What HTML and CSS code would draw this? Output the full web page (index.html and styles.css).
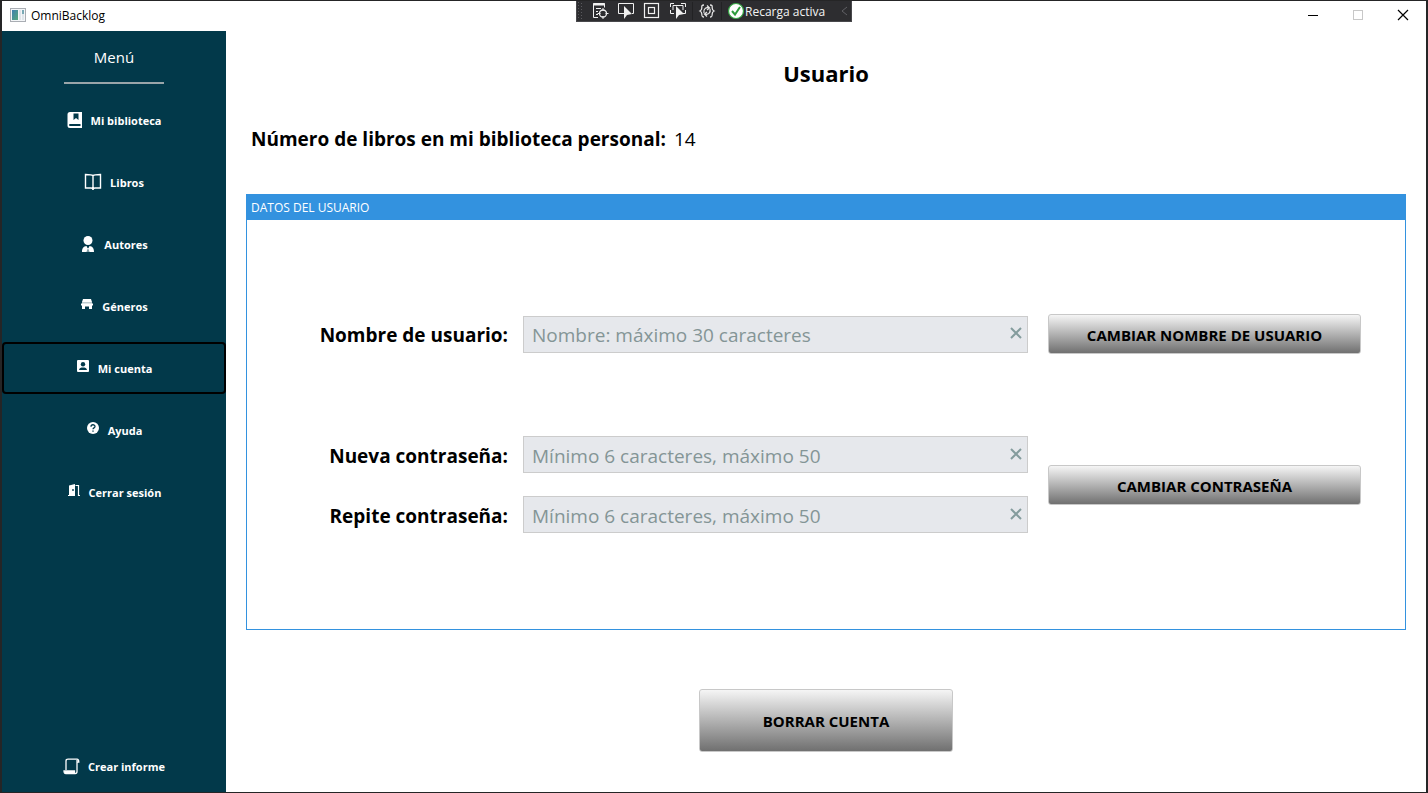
FILE: index.html
```html
<!DOCTYPE html>
<html lang="es">
<head>
<meta charset="utf-8">
<title>OmniBacklog</title>
<link rel="stylesheet" href="styles.css">
</head>
<body class="window">
  <div class="edge-mark"></div>
  <header class="titlebar">
    <svg class="app-icon" width="16" height="14" viewBox="0 0 16 14">
      <defs><linearGradient id="appFill" x1="0" y1="0" x2="1" y2="1"><stop offset="0" stop-color="#3f7fb0"/><stop offset="1" stop-color="#55a87c"/></linearGradient></defs>
      <rect x="0.5" y="0.5" width="15" height="13" fill="#f4f6f8" stroke="#a9adb3"/>
      <rect x="2" y="2" width="6" height="10" fill="url(#appFill)"/>
      <rect x="9" y="2" width="2" height="10" fill="#dfe5ea"/>
      <rect x="12" y="2" width="2" height="4" fill="#79a9b5"/>
      <rect x="12" y="6" width="2" height="6" fill="#dfe5ea"/>
    </svg>
    <span class="app-name">OmniBacklog</span>
    <div class="window-buttons">
      <button class="win-btn" aria-label="Minimizar"><svg width="12" height="12" viewBox="0 0 12 12"><path d="M1 6.500h10" stroke="#000"/></svg></button>
      <button class="win-btn" aria-label="Maximizar" disabled><svg width="12" height="12" viewBox="0 0 12 12"><rect x="1.500" y="1.500" width="9" height="9" fill="none" stroke="#c8c8c8"/></svg></button>
      <button class="win-btn" aria-label="Cerrar"><svg width="12" height="12" viewBox="0 0 12 12"><path d="M1 1l10 10M11 1L1 11" stroke="#000" stroke-width="1.200"/></svg></button>
    </div>
  </header>

  <div class="debug-bar">
    <svg width="6" height="18" viewBox="0 0 6 18"><path d="M1.500 0v18M4.500 1v17" stroke="#5a5a5e" stroke-dasharray="1 2"/></svg>
    <svg width="18" height="18" viewBox="0 0 18 18" fill="none" stroke="#f0f0f0"><path d="M7 15.500H2.500V1.500h11v4" /><path d="M2 2.500h12" stroke-width="2"/><path d="M5 6.500h5M5 9.500h2M5 12.500h2"/><circle cx="12" cy="11.500" r="3.500" stroke-width="1.300"/><path d="M12 6v3M12 14v3M6.500 11.500h3M14.500 11.500h3"/></svg>
    <svg width="18" height="18" viewBox="0 0 18 18"><path d="M7 11.500H1.500v-10h15v10H15" fill="none" stroke="#f0f0f0"/><path d="M7 4v13l3-4 5-1z" fill="#f0f0f0"/></svg>
    <svg width="18" height="18" viewBox="0 0 18 18" fill="none" stroke="#f0f0f0" stroke-width="1.200"><rect x="1.500" y="1.500" width="14" height="14"/><rect x="5.500" y="5.500" width="6" height="6"/></svg>
    <svg width="18" height="18" viewBox="0 0 18 18"><path d="M1.500 5V1.500H5M12 1.500h4.500V5M1.500 8v3.500H5M16.500 8v3.500H14M4 8V3.500h10V8" fill="none" stroke="#f0f0f0"/><path d="M7 4v13l3-4 5-1z" fill="#f0f0f0"/></svg>
    <span class="bar-split"></span>
    <svg width="18" height="18" viewBox="0 0 18 18" fill="none" stroke="#e4e4e4" stroke-width="1.300"><path d="M6 3C3.500 3 3.800 4 3.800 6S3 8.500 2 9c1 .5 1.800 1 1.800 3s0 3 2.200 3M12 3c2.500 0 2.200 1 2.200 3s.8 2.500 1.800 3c-1 .5-1.800 1-1.800 3s0 3-2.200 3"/><path d="M6 11c-1-4 2-6 5-5M9 3.500L11.500 6 9 8M12 7c1 4-2 6-5 5M9 10l-2.500 2L9 14.500"/></svg>
    <span class="bar-split"></span>
    <span class="debug-status">
      <svg width="18" height="18" viewBox="0 0 18 18"><circle cx="9" cy="9" r="7.500" fill="#fff" stroke="#36a845" stroke-width="1.200"/><path d="M5 9l3 3.500L13 5" fill="none" stroke="#2e9c3d" stroke-width="2"/></svg>
      Recarga activa
    </span>
    <svg class="debug-chevron" width="8" height="12" viewBox="0 0 8 12"><path d="M7 2L2 6l5 4" fill="none" stroke="#606065"/></svg>
  </div>

  <div class="layout">
    <aside class="sidebar">
      <h2 class="menu-title">Menú</h2>
      <nav class="menu">
        <button class="menu-item"><svg width="16" height="16" viewBox="0 0 16 16"><path d="M3 0h12v16H3a2.500 2.500 0 0 1-2.500-2.500v-11A2.500 2.500 0 0 1 3 0z" fill="#fff"/><path d="M6.500 1.500V8L9 6l2.500 2V1.500z" fill="#02394a"/><path d="M3 12h10.500v2H3a1 1 0 0 1 0-2z" fill="#02394a"/></svg>Mi biblioteca</button>
        <button class="menu-item"><svg width="18" height="18" viewBox="0 0 18 18" fill="none" stroke="#fff" stroke-width="1.400"><path d="M9 2.800C8 1.700 6.500 1.500 1.500 1.500V15H7c1 0 2 .3 2 2M9 2.800c1-1.100 2.500-1.300 7.500-1.300V15H11c-1 0-2 .3-2 2V2.800"/></svg>Libros</button>
        <button class="menu-item"><svg width="16" height="18" viewBox="0 0 16 18" fill="#fff"><circle cx="8" cy="5.500" r="4.500"/><path d="M2 17c0-4 1.500-5.500 4.500-6l1 2-.8 4zM14 17c0-4-1.500-5.500-4.500-6l-1 2 .8 4zM7.500 13h1v4h-1z"/></svg>Autores</button>
        <button class="menu-item"><svg width="14" height="18" viewBox="0 0 14 18" fill="#fff"><path d="M3 2h8l1 3H2z"/><path d="M2 5h10v2H2z" opacity=".75"/><path d="M1 6.500h12V8.500h-1V12H9V9.500H5V12H2V8.500H1z"/></svg>Géneros</button>
        <button class="menu-item menu-item-current"><svg width="14" height="18" viewBox="0 0 14 18"><rect x="1" y="1" width="12" height="12" rx="1" fill="#fff"/><circle cx="7" cy="5.200" r="2.200" fill="#02394a"/><path d="M3 11c.3-2 2-2.500 4-2.500s3.700.5 4 2.500z" fill="#02394a"/></svg>Mi cuenta</button>
        <button class="menu-item"><svg width="14" height="18" viewBox="0 0 14 18"><circle cx="7" cy="7" r="6" fill="#fff"/><path d="M5 5.800c0-2.800 4-2.500 4-.4C9 7 7 6.800 7 8.300M7 9.500v1.300" fill="none" stroke="#02394a" stroke-width="1.300"/></svg>Ayuda</button>
        <button class="menu-item"><svg width="14" height="18" viewBox="0 0 14 18"><path d="M1 12h1V2.500L8 1v12H1z" fill="#fff"/><path d="M8.500 2.500h3V12.500H13" fill="none" stroke="#fff" stroke-width="1.200"/><circle cx="6" cy="7" r=".9" fill="#02394a"/></svg>Cerrar sesión</button>
        <button class="menu-item menu-item-last"><svg width="17" height="17" viewBox="0 0 17 17" fill="none" stroke="#fff" stroke-width="1.300"><path d="M3 12V3c0-1.500.5-1.800 2-1.800h9c1.500 0 1.800.8 1.800 3H14M14 2v11.500c0 1.300-.5 2-1.800 2H3c-1.500 0-2-.8-2-2.500h10.500v1"/><path d="M1.500 14.200H12" stroke-width="2.400"/></svg>Crear informe</button>
      </nav>
    </aside>

    <main class="content">
      <h1 class="page-title">Usuario</h1>
      <p class="summary"><strong>Número de libros en mi biblioteca personal:</strong><span>14</span></p>

      <section class="panel">
        <h2 class="panel-title">DATOS DEL USUARIO</h2>
        <div class="panel-body">
          <form class="form-row">
            <div class="fields">
              <label class="field-label" for="user">Nombre de usuario:</label>
              <div class="field"><input class="field-input" id="user" type="text" maxlength="30" placeholder="Nombre: máximo 30 caracteres"><button class="clear" type="button" aria-label="Borrar texto"><svg width="12" height="12" viewBox="0 0 12 12"><path d="M1 1l10 10M11 1L1 11" stroke="#849c9d" stroke-width="2"/></svg></button></div>
            </div>
            <button class="action" type="button">CAMBIAR NOMBRE DE USUARIO</button>
          </form>
          <form class="form-row">
            <div class="fields">
              <label class="field-label" for="pass">Nueva contraseña:</label>
              <div class="field"><input class="field-input" id="pass" type="password" placeholder="Mínimo 6 caracteres, máximo 50"><button class="clear" type="button" aria-label="Borrar texto"><svg width="12" height="12" viewBox="0 0 12 12"><path d="M1 1l10 10M11 1L1 11" stroke="#849c9d" stroke-width="2"/></svg></button></div>
              <label class="field-label" for="pass2">Repite contraseña:</label>
              <div class="field"><input class="field-input" id="pass2" type="password" placeholder="Mínimo 6 caracteres, máximo 50"><button class="clear" type="button" aria-label="Borrar texto"><svg width="12" height="12" viewBox="0 0 12 12"><path d="M1 1l10 10M11 1L1 11" stroke="#849c9d" stroke-width="2"/></svg></button></div>
            </div>
            <button class="action" type="button">CAMBIAR CONTRASEÑA</button>
          </form>
        </div>
      </section>

      <div class="footer">
        <button class="action action-large" type="button">BORRAR CUENTA</button>
      </div>
    </main>
  </div>
</body>
</html>
```

FILE: styles.css
```css
* {
  box-sizing: border-box;
}

button,
input {
  font-family: inherit;
}

.window {
  position: relative;
  display: flex;
  flex-direction: column;
  min-height: 100vh;
  margin: 0;
  border: solid #252526;
  border-width: 1px 2px;
  background: #fff;
  color: #000;
  font-family: "Open Sans", "Noto Sans", sans-serif;
}

.edge-mark {
  position: absolute;
  top: 662px;
  left: -2px;
  width: 2px;
  height: 22px;
  background: #0c68b0;
}

/* Title bar */

.titlebar {
  display: flex;
  align-items: center;
  height: 30px;
  padding: 0 1px 2px 8px;
}

.app-name {
  margin-left: 5px;
  font-size: 12px;
}

.window-buttons {
  display: flex;
  margin-left: auto;
}

.win-btn {
  display: flex;
  align-items: center;
  justify-content: center;
  width: 45px;
  height: 28px;
  padding: 0;
  border: 0;
  background: none;
}

/* Debug toolbar */

.debug-bar {
  position: absolute;
  top: -1px;
  left: 50%;
  display: flex;
  align-items: center;
  gap: 8px;
  width: 276px;
  height: 22px;
  padding: 0 3px 0 0;
  border: 1px solid #48484c;
  background: #2d2d30;
  color: #f4f4f4;
  transform: translateX(-50%);
}

.debug-bar svg {
  flex: none;
}

.bar-split {
  width: 1px;
  height: 18px;
  margin: 0 -3px;
  background: #222224;
}

.debug-status {
  display: flex;
  align-items: center;
  font-size: 12px;
  white-space: nowrap;
}

.debug-chevron {
  margin-left: auto;
}

/* Sidebar */

.layout {
  display: flex;
  flex: 1;
}

.sidebar {
  display: flex;
  flex: none;
  flex-direction: column;
  align-items: center;
  width: 224px;
  background: #02394a;
  color: #fff;
}

.menu-title {
  width: 100px;
  margin: 0 0 10px;
  padding: 14px 0 13px;
  border-bottom: 2px solid #9aa5a9;
  font-size: 15px;
  font-weight: 400;
  line-height: 24px;
  text-align: center;
}

.menu {
  display: flex;
  flex: 1;
  flex-direction: column;
  gap: 10px;
  width: 100%;
}

.menu-item {
  display: flex;
  align-items: center;
  justify-content: center;
  gap: 8px;
  height: 52px;
  padding: 0;
  border: 2px solid transparent;
  border-radius: 4px;
  background: none;
  color: inherit;
  font-size: 11px;
  font-weight: 700;
}

.menu-item-current {
  border-color: #000;
}

.menu-item-last {
  margin-top: auto;
}

/* Content */

.content {
  display: flex;
  flex: 1;
  flex-direction: column;
  padding: 0 20px;
}

.page-title {
  margin: 26px 0 0;
  font-size: 22px;
  font-weight: 700;
  line-height: 32px;
  text-align: center;
}

.summary {
  display: flex;
  gap: 8px;
  margin: 36px 0 41px;
  padding-left: 5px;
  font-size: 19px;
  line-height: 28px;
}

.panel {
  border: 1px solid #3392df;
}

.panel-title {
  margin: 0;
  padding: 0 4px;
  background: #3392df;
  color: #fff;
  font-size: 12px;
  font-weight: 400;
  line-height: 25px;
}

.panel-body {
  display: flex;
  flex-direction: column;
  gap: 82px;
  padding: 94px 44px 96px 0;
}

.form-row {
  display: grid;
  grid-template-columns: 781fr 313fr;
  align-items: center;
  gap: 20px;
}

.fields {
  display: grid;
  grid-template-columns: 276fr 505fr;
  align-items: center;
  row-gap: 23px;
}

.field-label {
  padding: 2px 15px 0 0;
  font-size: 19px;
  font-weight: 700;
  text-align: right;
}

.field {
  display: flex;
  align-items: center;
  height: 37px;
  border: 1px solid #ccc;
  background: #e6e8ec;
}

.field-input {
  flex: 1;
  min-width: 0;
  height: 100%;
  padding: 2px 8px 0;
  border: 0;
  outline: 0;
  background: none;
  font-size: 19px;
}

.field-input::placeholder {
  color: #849596;
  opacity: 1;
}

.clear {
  display: flex;
  padding: 0 5px 2px;
  border: 0;
  background: none;
}

.action {
  height: 40px;
  padding: 2px 6px 0;
  border: 1px solid #c8c8c8;
  border-radius: 3px;
  background: linear-gradient(#f5f5f5, #707070);
  color: #000;
  font-size: 15px;
  font-weight: 700;
}

.footer {
  display: flex;
  flex: 1;
  align-items: center;
  justify-content: center;
  padding: 40px 0 22px;
}

.action-large {
  width: 254px;
  height: 63px;
}
```
